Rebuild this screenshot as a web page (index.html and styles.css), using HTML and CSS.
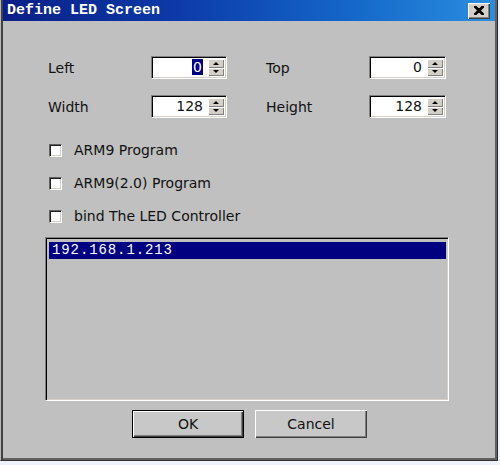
FILE: index.html
```html
<!DOCTYPE html>
<html lang="en">
<head>
    <meta charset="UTF-8">
    <title>Define LED Screen</title>
    <link rel="stylesheet" href="styles.css">
</head>
<body>
    <div class="window">
        <div class="titlebar">
            <span class="title">Define LED Screen</span>
            <button class="close-btn">
                <svg width="10" height="9" viewBox="0 0 10 9">
                    <path d="M1 0 L5 4 L9 0 M1 9 L5 5 L9 9 M0 0 L4.5 4.5 L0 9 M10 0 L5.5 4.5 L10 9" stroke="#000" stroke-width="2" fill="none"/>
                </svg>
            </button>
        </div>

        <div class="content">
            <div class="fields">
                <label class="field-label">Left</label>
                <div class="spin">
                    <div class="spin-value"><span class="sel">0</span></div>
                    <div class="spin-btns">
                        <div class="spin-btn"><span class="arrow up"></span></div>
                        <div class="spin-btn"><span class="arrow down"></span></div>
                    </div>
                </div>
                <span></span>
                <label class="field-label">Top</label>
                <div class="spin">
                    <div class="spin-value">0</div>
                    <div class="spin-btns">
                        <div class="spin-btn"><span class="arrow up"></span></div>
                        <div class="spin-btn"><span class="arrow down"></span></div>
                    </div>
                </div>

                <label class="field-label">Width</label>
                <div class="spin">
                    <div class="spin-value">128</div>
                    <div class="spin-btns">
                        <div class="spin-btn"><span class="arrow up"></span></div>
                        <div class="spin-btn"><span class="arrow down"></span></div>
                    </div>
                </div>
                <span></span>
                <label class="field-label">Height</label>
                <div class="spin">
                    <div class="spin-value">128</div>
                    <div class="spin-btns">
                        <div class="spin-btn"><span class="arrow up"></span></div>
                        <div class="spin-btn"><span class="arrow down"></span></div>
                    </div>
                </div>
            </div>

            <div class="checks">
                <div class="check-row"><span class="checkbox"></span>ARM9 Program</div>
                <div class="check-row"><span class="checkbox"></span>ARM9(2.0) Program</div>
                <div class="check-row"><span class="checkbox"></span>bind The LED Controller</div>
            </div>

            <div class="listbox">
                <div class="list-item selected">192.168.1.213</div>
            </div>

            <div class="buttons">
                <button class="btn default">OK</button>
                <button class="btn">Cancel</button>
            </div>
        </div>
    </div>
</body>
</html>
```

FILE: styles.css
```css
body {
    margin: 0;
    padding: 0;
    background-color: #eef3fb;
    font-family: "DejaVu Sans", Verdana, sans-serif;
    font-size: 14px;
    color: #111;
}

.window {
    width: 498px;
    height: 461px;
    box-sizing: border-box;
    background-color: #c0c0c0;
    border-left: 1px solid #b8b8b8;
    border-right: 1px solid #303030;
    border-bottom: 1px solid #303030;
    box-shadow: inset 2px 0 #404040, inset -2px -2px #606060;
    padding: 0 2px 2px 2px;
}

.titlebar {
    height: 21px;
    display: flex;
    align-items: center;
    justify-content: space-between;
    background: linear-gradient(to right, #0a1f86 0%, #0c3aa8 35%, #1466c8 70%, #2a8ee0 100%);
    padding: 0 5px 0 4px;
}

.title {
    font-family: "Liberation Mono", "Courier New", monospace;
    font-weight: bold;
    font-size: 15px;
    color: #fff;
}

.close-btn {
    width: 22px;
    height: 16px;
    padding: 0;
    display: flex;
    align-items: center;
    justify-content: center;
    background-color: #d4d0c8;
    border: none;
    box-shadow: inset 1px 1px #fff, inset -1px -1px #404040, inset -2px -2px #808080;
}

.content {
    padding: 35px 0 0 44px;
}

.fields {
    display: grid;
    grid-template-columns: 104px 76px 38px 104px 77px;
    grid-auto-rows: 23px;
    row-gap: 16px;
    align-items: center;
}

.field-label {
    padding-left: 1px;
}

.spin {
    height: 23px;
    display: flex;
    box-sizing: border-box;
    background-color: #fff;
    border-top: 1px solid #808080;
    border-left: 1px solid #808080;
    border-right: 1px solid #fff;
    border-bottom: 1px solid #fff;
    box-shadow: inset 1px 1px #000, inset -1px -1px #d4d0c8;
    padding: 2px;
}

.spin-value {
    flex: 1;
    text-align: right;
    padding-right: 5px;
    line-height: 17px;
}

.sel {
    background-color: #000080;
    color: #fff;
    padding: 0 1px;
}

.spin-btns {
    width: 16px;
    display: flex;
    flex-direction: column;
}

.spin-btn {
    flex: 1;
    display: flex;
    align-items: center;
    justify-content: center;
    background-color: #d4d0c8;
    box-shadow: inset 1px 1px #fff, inset -1px -1px #808080;
}

.arrow {
    width: 0;
    height: 0;
    border-left: 3px solid transparent;
    border-right: 3px solid transparent;
}

.arrow.up {
    border-bottom: 3px solid #000;
}

.arrow.down {
    border-top: 3px solid #000;
}

.checks {
    margin-top: 23px;
    display: flex;
    flex-direction: column;
    gap: 15px;
}

.check-row {
    display: flex;
    align-items: center;
    height: 18px;
}

.checkbox {
    width: 13px;
    height: 13px;
    box-sizing: border-box;
    margin: 0 12px 0 2px;
    background-color: #fff;
    border-top: 1px solid #606060;
    border-left: 1px solid #606060;
    border-right: 1px solid #fff;
    border-bottom: 1px solid #fff;
    box-shadow: inset 1px 1px #202020, inset -1px -1px #d4d0c8;
}

.listbox {
    margin: 12px 0 0 -2px;
    width: 404px;
    height: 164px;
    box-sizing: border-box;
    background-color: #c0c0c0;
    border-top: 1px solid #808080;
    border-left: 1px solid #808080;
    border-right: 1px solid #fff;
    border-bottom: 1px solid #fff;
    box-shadow: inset 1px 1px #000, inset -1px -1px #d4d0c8;
    padding: 4px 2px 0 3px;
}

.list-item {
    height: 17px;
    line-height: 17px;
    font-family: "Liberation Mono", "Courier New", monospace;
    font-size: 14px;
    letter-spacing: 0.9px;
    padding-left: 3px;
}

.list-item.selected {
    background-color: #000080;
    color: #fff;
}

.buttons {
    display: flex;
    gap: 11px;
    margin: 9px 0 0 85px;
}

.btn {
    width: 112px;
    height: 28px;
    font-family: "DejaVu Sans", Verdana, sans-serif;
    font-size: 14px;
    color: #111;
    background-color: #c8c8c8;
    border: none;
    box-shadow: inset 1px 1px #fff, inset -1px -1px #404040, inset -2px -2px #808080;
}

.btn.default {
    border: 1px solid #000;
    box-shadow: inset 1px 1px #fff, inset -1px -1px #404040, inset -2px -2px #808080;
}
```
